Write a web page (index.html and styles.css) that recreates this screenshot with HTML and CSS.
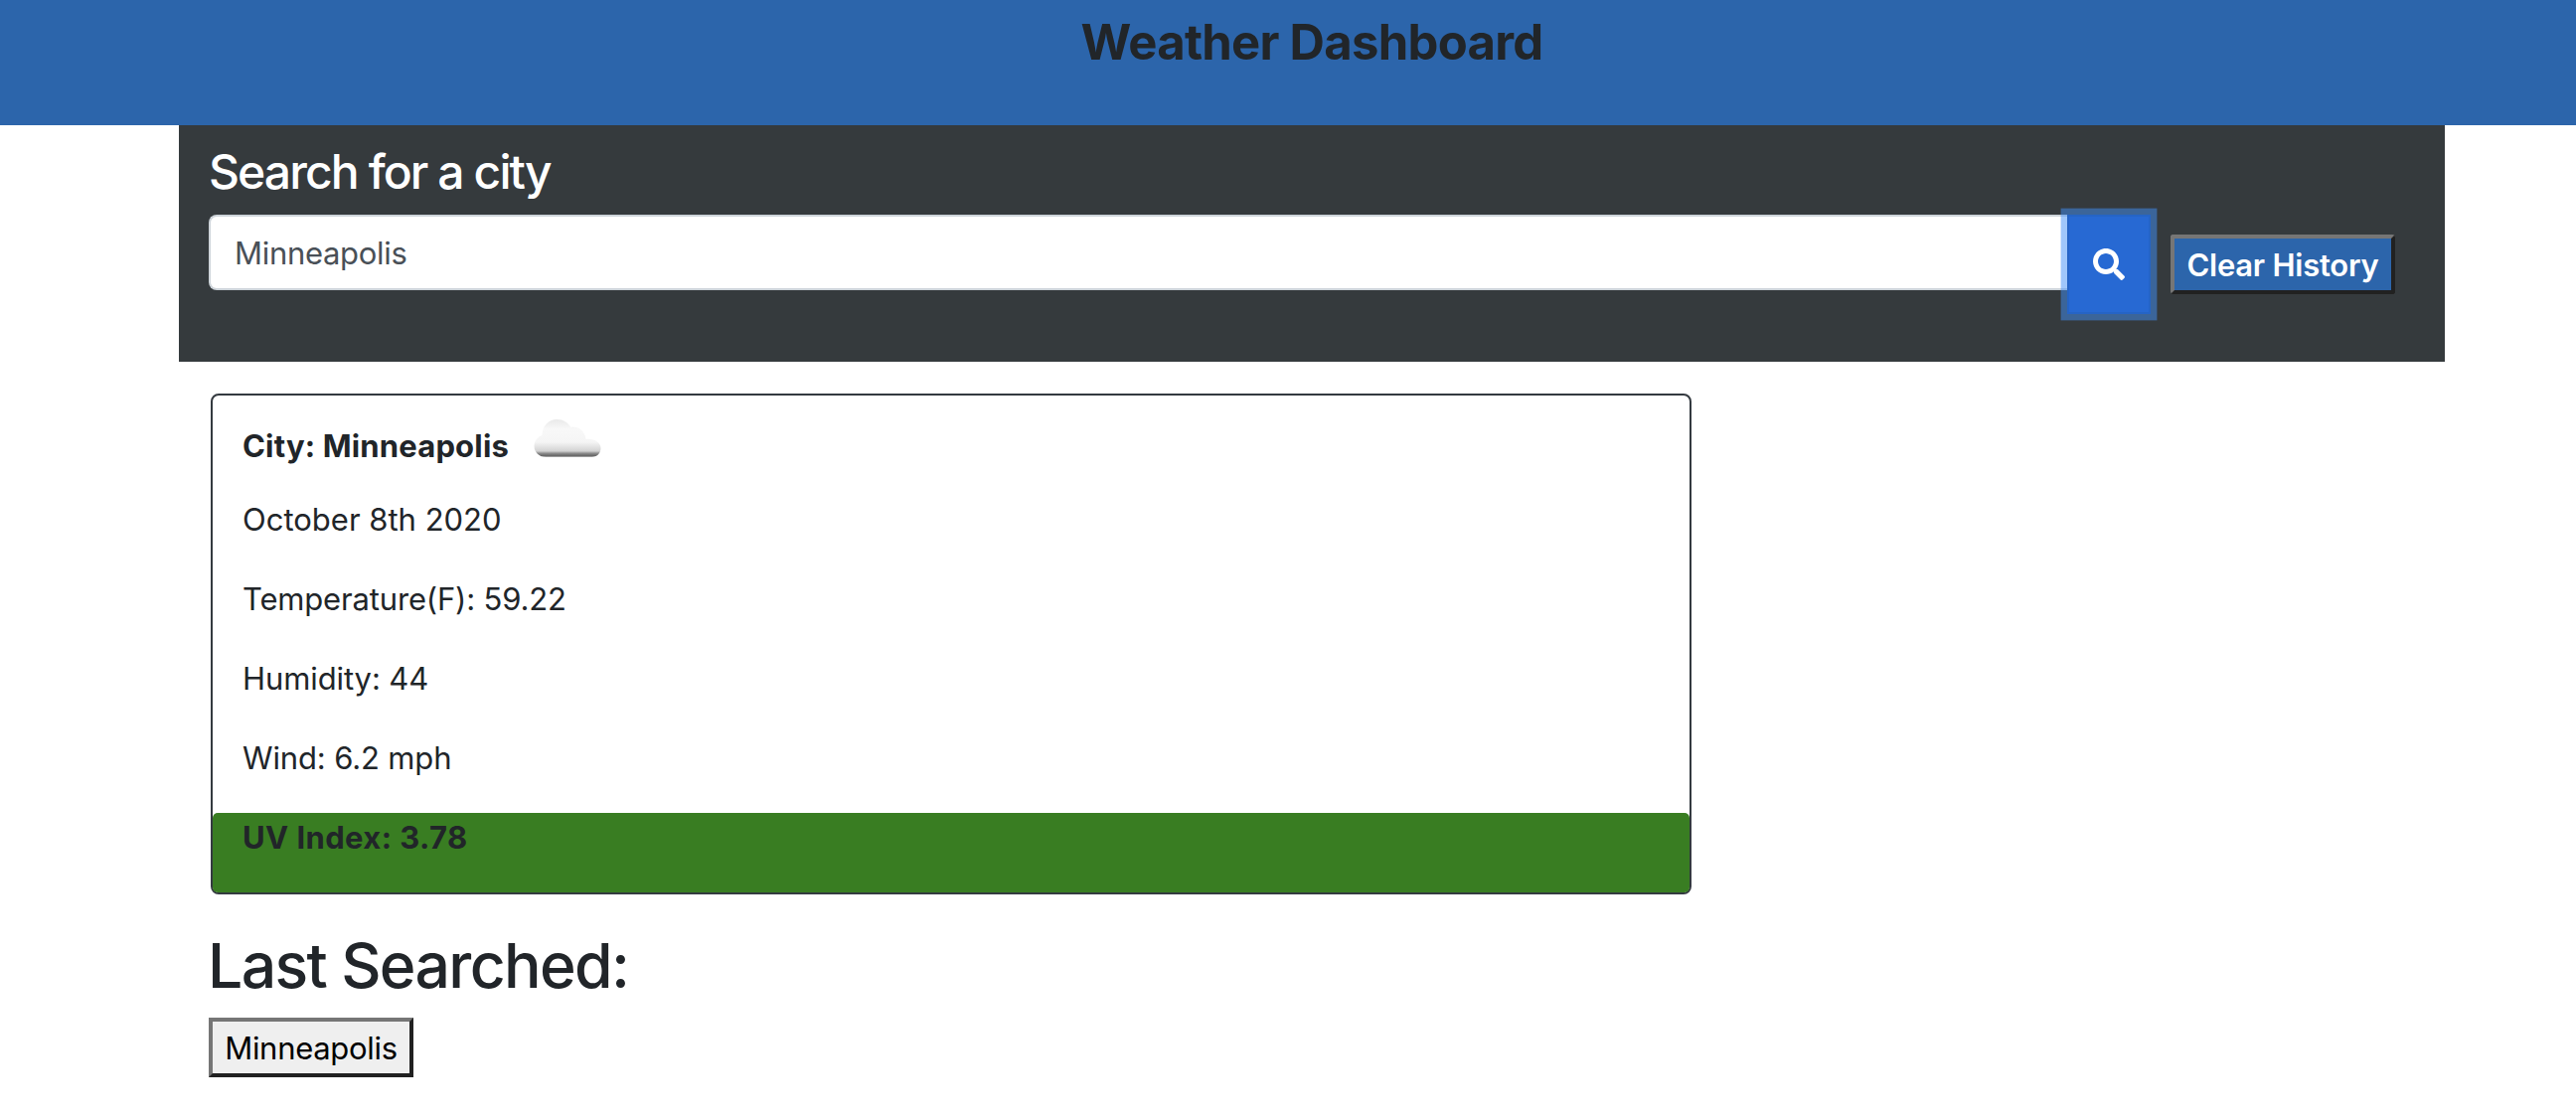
FILE: index.html
```
<!DOCTYPE html>
<html lang="en">
<head>
  <meta charset="utf-8">
  <title>Weather Dashboard</title>
  <link rel="stylesheet" href="styles.css">
</head>
<body>
  <header class="banner"><h1 class="banner-title">Weather Dashboard</h1></header>
  <main class="container">
    <section class="search">
      <h2 class="search-title">Search for a city</h2>
      <div class="search-row">
        <input class="search-input" type="text" value="Minneapolis" aria-label="City">
        <button class="search-button" type="button" aria-label="Search">
          <svg class="search-icon" viewBox="0 0 512 512"><path fill="currentColor" d="M505 442.7L405.3 343c-4.5-4.5-10.6-7-17-7H372c27.6-35.3 44-79.7 44-128C416 93.1 322.9 0 208 0S0 93.1 0 208s93.1 208 208 208c48.3 0 92.7-16.4 128-44v16.3c0 6.4 2.5 12.5 7 17l99.7 99.7c9.4 9.4 24.6 9.4 33.9 0l28.3-28.3c9.4-9.4 9.4-24.6.1-34zM208 336c-70.700 0-128-57.200-128-128 0-70.700 57.200-128 128-128 70.700 0 128 57.200 128 128 0 70.700-57.200 128-128 128z"/></svg>
        </button>
        <button class="clear-button" type="button">Clear History</button>
      </div>
    </section>
    <section class="card">
      <div class="card-city">
        <span class="city-name">City: Minneapolis</span>
        <svg class="cloud" viewBox="0 0 72 42">
          <defs>
            <linearGradient id="cloud-fill" x1="0" y1="0" x2="0" y2="1">
              <stop offset="0" stop-color="#e9e9e9"/>
              <stop offset=".25" stop-color="#f8f8f8"/>
              <stop offset=".6" stop-color="#f5f5f5"/>
              <stop offset=".84" stop-color="#d2d2d2"/>
              <stop offset=".9" stop-color="#8b8b8b"/>
              <stop offset=".96" stop-color="#696969"/>
              <stop offset="1" stop-color="#b5b5b5"/>
            </linearGradient>
            <filter id="cloud-soft"><feGaussianBlur stdDeviation=".6"/></filter>
          </defs>
          <path filter="url(#cloud-soft)" fill="url(#cloud-fill)" d="M14 40C7 40 2 35 2 29c0-5 3-9 8-11C10 9 16 2 25 2c6 0 11 3 14 8 6-1 11 2 13 6 1 2 2 4 2 6 8-1 15 3 15 9 0 5-4 9-9 9Z"/>
        </svg>
      </div>
      <p class="card-line">October 8th 2020</p>
      <p class="card-line temperature">Temperature(F): 59.22</p>
      <p class="card-line humidity">Humidity: 44</p>
      <p class="card-line wind">Wind: 6.2 mph</p>
      <p class="card-line uv">UV Index: 3.78</p>
    </section>
    <section class="history">
      <h2 class="history-title">Last Searched:</h2>
      <button class="history-button" type="button">Minneapolis</button>
    </section>
  </main>
</body>
</html>
```
FILE: styles.css
```
* { box-sizing: border-box; }

body {
  margin: 0;
  background: #fff;
  color: #212529;
  font: 400 31px/48px Inter, "Liberation Sans", sans-serif;
}

h1, h2, p { margin: 0; }

button { font: inherit; margin: 0; }

.banner {
  height: 126px;
  padding: 13px 0 0 48px;
  background: #2c65ab;
  text-align: center;
}

.banner-title {
  font-size: 49px;
  line-height: 60px;
  font-weight: 700;
  letter-spacing: -0.72px;
}

.container { width: 2280px; margin-left: 180px; }

.search {
  height: 238px;
  padding: 19px 50px 0 30px;
  background: #353a3d;
}

.search-title {
  margin-bottom: 15px;
  color: #fff;
  font-size: 48px;
  line-height: 56px;
  font-weight: 500;
  letter-spacing: -1.9px;
}

.search-row { display: flex; align-items: flex-start; }

.search-input {
  flex: 1;
  height: 76px;
  padding: 0 24px;
  border: 2px solid #ced4da;
  border-right: 0;
  border-radius: 8px 0 0 8px;
  background: #fff;
  color: #495057;
  font: inherit;
  letter-spacing: -0.3px;
}

.search-button {
  display: flex;
  align-items: center;
  justify-content: center;
  width: 84px;
  height: 100px;
  margin-right: 20px;
  padding: 0;
  border: 2px solid #2564c6;
  background: #2769d3;
  color: #fff;
  box-shadow: 0 0 0 6.4px rgba(66, 144, 247, 0.5);
}

.search-icon { width: 32px; height: 32px; }

.clear-button {
  width: 226px;
  height: 60px;
  margin-top: 20px;
  padding: 1px 0 0;
  border: 4px solid;
  border-color: #767676 #212121 #212121 #767676;
  border-radius: 3px;
  background: #2c65ab;
  color: #fff;
  font-weight: 600;
  line-height: 48px;
  letter-spacing: -0.25px;
}

.card {
  width: 1490px;
  height: 504px;
  margin: 32px 0 0 32px;
  border: 2px solid #343a40;
  border-radius: 8px;
}

.card-city {
  display: flex;
  align-items: flex-start;
  height: 100px;
  padding: 22px 0 0 30px;
  font-weight: 700;
}

.city-name { width: 291px; letter-spacing: 0.17px; padding-top: 5px; }

.cloud { width: 73px; height: 42px; }

.card-line {
  height: 80px;
  padding: 1px 0 0 30px;
}

.temperature { letter-spacing: -0.17px; }

.humidity { letter-spacing: -0.1px; }

.wind { letter-spacing: -0.14px; }

.uv {
  border-radius: 5px;
  background: #397d22;
  font-weight: 700;
  letter-spacing: 0.4px;
}

.history { padding: 33px 0 0 30px; }

.history-title {
  margin: 0 0 15px -1px;
  font-size: 62.5px;
  line-height: 76px;
  font-weight: 500;
  letter-spacing: -1.66px;
}

.history-button {
  display: block;
  width: 206px;
  height: 60px;
  padding: 1px 0 0;
  border: 4px solid;
  border-color: #767676 #212121 #212121 #767676;
  background: #efefef;
  color: #000;
  line-height: 48px;
  letter-spacing: -0.3px;
}
```
